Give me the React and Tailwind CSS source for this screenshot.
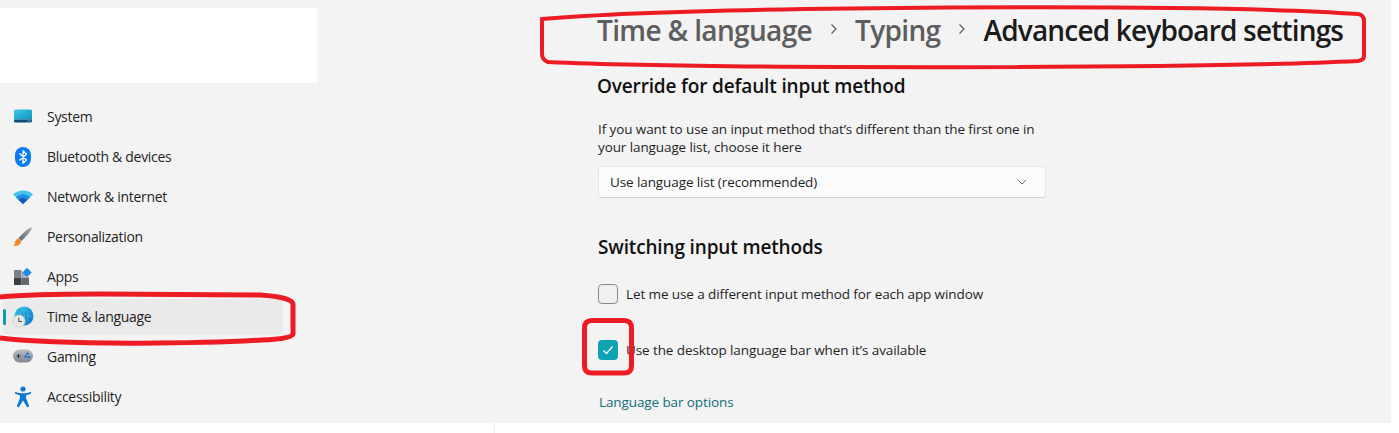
import React from "react";

const font = "font-['Open_Sans','Noto_Sans',sans-serif]";

const SystemIcon = () => (
  <svg width="20" height="20" viewBox="0 0.5 20 20">
    <defs>
      <linearGradient id="sys" x1="0" y1="0" x2="1" y2="1">
        <stop offset="0" stopColor="#35c9e0" />
        <stop offset="1" stopColor="#1592c4" />
      </linearGradient>
    </defs>
    <path d="M1 4.500a1.500 1.500 0 0 1 1.500-1.500h15A1.500 1.500 0 0 1 19 4.500V13H1z" fill="url(#sys)" />
    <path d="M1 13h18v1.500a1.500 1.500 0 0 1-1.500 1.500h-15A1.500 1.500 0 0 1 1 14.500z" fill="#0d4f78" />
    <rect x="14.500" y="14" width="1" height="1" fill="#9fd0e6" />
    <rect x="16.500" y="14" width="1" height="1" fill="#9fd0e6" />
  </svg>
);

const BluetoothIcon = () => (
  <svg width="20" height="22" viewBox="0 0 20 22">
    <rect x="2" y="1" width="16" height="20" rx="8" fill="#0a7cf0" />
    <path d="M6.500 7.500l7 6.500-3.500 3.200V4.800L13.500 8l-7 6.500" fill="none" stroke="#fff" strokeWidth="1.300" strokeLinejoin="round" />
  </svg>
);

const WifiIcon = () => (
  <svg width="20" height="20" viewBox="0 1 20 20">
    <path d="M0 8.500C5.500 3.200 14.500 3.200 20 8.500l-2.800 2.800C12.800 7 7.200 7 2.800 11.300z" fill="#43c3ee" />
    <path d="M2.800 11.300C7.200 7 12.800 7 17.200 11.300l-2.400 2.400C12 11 8 11 5.200 13.700z" fill="#1c8fe0" />
    <path d="M5.200 13.700C8 11 12 11 14.800 13.700L10 18.300z" fill="#0a5cb8" />
  </svg>
);

const BrushIcon = () => (
  <svg width="20" height="22" viewBox="0 0 20 22">
    <defs>
      <linearGradient id="brush" x1="0" y1="1" x2="1" y2="0">
        <stop offset="0" stopColor="#5c6670" />
        <stop offset="1" stopColor="#a6adb4" />
      </linearGradient>
    </defs>
    <path d="M17.500 1.500c1 0 1.500.7 1.200 1.600C16.500 7 12 12 8.500 15l-3-3C8.700 8.500 13.500 3.500 17.500 1.500z" fill="url(#brush)" />
    <path d="M5.200 12.200l3 3c-.3 3.200-3.300 5-7.700 4.800 1.800-1.200 1-3 1.900-4.900.6-1.300 1.600-2.400 2.800-2.900z" fill="#f08a24" />
  </svg>
);

const AppsIcon = () => (
  <svg width="20" height="20" viewBox="0 0 20 20">
    <rect x="1" y="3" width="7.500" height="7.500" fill="#7c8288" />
    <rect x="1" y="10.500" width="7.500" height="7.500" fill="#3d4146" />
    <rect x="8.500" y="10.500" width="7.500" height="7.500" fill="#63686d" />
    <rect x="8.500" y="5" width="4" height="5.500" fill="#a5abb0" />
    <path d="M14 .8l4.700 4.700-4.700 4.700-4.700-4.700z" fill="#1c8ee8" />
  </svg>
);

const GlobeIcon = () => (
  <svg width="22" height="22" viewBox="0 0 22 22">
    <defs>
      <linearGradient id="globe" x1="0" y1="0" x2="1" y2="1">
        <stop offset="0" stopColor="#2fc6dc" />
        <stop offset="1" stopColor="#0f6fd0" />
      </linearGradient>
    </defs>
    <circle cx="12" cy="10" r="9.500" fill="url(#globe)" />
    <path d="M12 .5v19M2.500 10h19M12 .5c-3 3-4 6-4 9.500s1 6.500 4 9.500M12 .5c3 3 4 6 4 9.500s-1 6.500-4 9.500" fill="none" stroke="#7fdcec" strokeWidth=".5" opacity=".6" />
    <circle cx="7" cy="15" r="6" fill="#e9e9e9" stroke="#c9c9c9" strokeWidth=".6" />
    <path d="M6.800 11.800V15.500H9.800" fill="none" stroke="#444" strokeWidth="1" />
  </svg>
);

const GamepadIcon = () => (
  <svg width="20" height="16" viewBox="0 1 20 16">
    <defs>
      <linearGradient id="pad" x1="0" y1="0" x2="0" y2="1">
        <stop offset="0" stopColor="#b9bec3" />
        <stop offset="1" stopColor="#7f868c" />
      </linearGradient>
    </defs>
    <rect x="0" y="1.500" width="20" height="13" rx="6.500" fill="url(#pad)" />
    <path d="M3.500 8h4M5.500 6v4" stroke="#30343a" strokeWidth="1" />
    <circle cx="14.500" cy="5.800" r="1.300" fill="#1472d0" />
    <circle cx="12.700" cy="8.500" r="1.300" fill="#1472d0" />
    <circle cx="16" cy="9" r="1.300" fill="#1472d0" />
  </svg>
);

const AccessIcon = () => (
  <svg width="18" height="22" viewBox="0 0 18 22">
    <circle cx="9" cy="3" r="2.600" fill="#0f78d4" />
    <path d="M1.200 5.800c-.8 1.200 0 2 .8 2.300L6 9.500V12l-3 7.500c-.4 1.500 1.600 2.300 2.300 1L9 14.500l3.700 6c.7 1.300 2.700.5 2.300-1L12 12V9.500l4-1.400c.8-.3 1.600-1.100.8-2.300-2.500 1-5 1.500-7.800 1.500s-5.300-.5-7.800-1.500z" fill="#0f78d4" />
  </svg>
);

const navItems = [
  { label: "System", icon: <SystemIcon /> },
  { label: "Bluetooth & devices", icon: <BluetoothIcon /> },
  { label: "Network & internet", icon: <WifiIcon /> },
  { label: "Personalization", icon: <BrushIcon /> },
  { label: "Apps", icon: <AppsIcon /> },
  { label: "Time & language", icon: <GlobeIcon />, active: true },
  { label: "Gaming", icon: <GamepadIcon /> },
  { label: "Accessibility", icon: <AccessIcon /> },
];

const Sidebar = () => (
  <aside className="w-[317px] shrink-0 pt-2">
    <div className="h-[75px] bg-white" />
    <nav className="mt-[14px] flex flex-col">
      {navItems.map((item) => (
        <div key={item.label} className="h-10 flex items-center pl-[3px] pr-[34px]">
          <div className={`relative flex h-9 w-full items-center rounded-md ${item.active ? "bg-[#eaeaea]" : ""}`}>
            {item.active && <span className="absolute left-0 top-[10px] h-4 w-[3px] rounded-full bg-[#0e9aa7]" />}
            <span className="mr-1 flex w-10 justify-center">{item.icon}</span>
            <span className="pb-[2px] text-[14px] tracking-[-0.3px] text-[#1f1f1f]">{item.label}</span>
          </div>
        </div>
      ))}
    </nav>
  </aside>
);

const Chevron = ({ className }) => (
  <svg width="10" height="12" viewBox="0 0 10 12" className={`mb-[2px] ${className}`}>
    <path d="M2.500 1.500L7 6l-4.500 4.500" fill="none" stroke="#5c5c5c" strokeWidth="1.200" />
  </svg>
);

const Breadcrumb = () => (
  <div className="-ml-px flex h-[60px] items-center whitespace-nowrap text-[28px] font-semibold tracking-[-0.65px]">
    <span className="text-[#5d5d5d]">Time &amp; language</span>
    <Chevron className="mx-[16.5px]" />
    <span className="text-[#5d5d5d]">Typing</span>
    <Chevron className="mx-[16.5px]" />
    <span className="tracking-[-0.82px] text-[#1b1b1b]">Advanced keyboard settings</span>
  </div>
);

const Main = () => (
  <main className="flex-1 pl-[281px] text-[#1f1f1f]">
    <Breadcrumb />
    <h2 className="mt-[12px] -ml-px text-[19px] font-semibold leading-[28px] tracking-[-0.15px] text-[#111]">Override for default input method</h2>
    <p className="mt-5 w-[460px] text-[13.5px] leading-[18px] tracking-[-0.1px]">
      If you want to use an input method that’s different than the first one in your language list, choose it here
    </p>
    <div className="mt-[10px] flex h-8 w-[448px] items-center justify-between rounded border border-[#e5e5e5] border-b-[#cfcfcf] bg-[#fbfbfb] pl-[11px] pr-[18px] text-[13.5px] tracking-[-0.1px]">
      <span>Use language list (recommended)</span>
      <svg width="10" height="6" viewBox="0 0 10 6">
        <path d="M.8.800L5 5l4.200-4.200" fill="none" stroke="#6a6a6a" strokeWidth="1" />
      </svg>
    </div>
    <h2 className="mt-[35px] text-[19px] font-semibold leading-[28px] tracking-[-0.15px] text-[#111]">Switching input methods</h2>
    <div className="mt-[23px] flex h-5 items-center gap-2 text-[13.5px] tracking-[-0.1px]">
      <span className="h-5 w-5 rounded border border-[#8b8b8b] bg-[#f0f0f0]" />
      <span>Let me use a different input method for each app window</span>
    </div>
    <div className="mt-9 flex h-5 items-center gap-2 text-[13.5px] tracking-[-0.1px]">
      <span className="flex h-5 w-5 items-center justify-center rounded bg-[#0ca3b3]">
        <svg width="12" height="10" viewBox="0 0 12 10">
          <path d="M1.500 5.500l3 3 6-7" fill="none" stroke="#fff" strokeWidth="1.200" />
        </svg>
      </span>
      <span>Use the desktop language bar when it’s available</span>
    </div>
    <a className="mt-[33px] ml-[1px] block text-[13.5px] font-medium leading-[18px] tracking-[-0.1px] text-[#0f6f78]">Language bar options</a>
  </main>
);

// red marker rings drawn over the screenshot
const Annotations = () => (
  <svg width="1399" height="433" className="pointer-events-none absolute left-0 top-0" fill="none" stroke="#ed1c24">
    <path strokeWidth="4" d="M542 19 C700 6 1200 3 1358 14 Q1364 15 1364 21 L1364 56 Q1364 60 1358 61 C1200 69 700 69 548 62 Q542 60 542 54 Z" />
    <path strokeWidth="5" d="M0 297 C30 294 60 294 100 294 L260 295 Q292 297 293 304 L293 334 Q292 339 262 340 C200 344 60 345 0 338" />
    <path strokeWidth="5" d="M592 320.5 L624 320.5 Q631.5 320.5 631.5 328 L631.5 366 Q631.5 373 624 373 L592 373 Q584.5 373 584.5 366 L584.5 328 Q584.5 320.5 592 320.5 Z" />
  </svg>
);

export default function App() {
  return (
    <div className={`relative h-[433px] w-[1399px] overflow-hidden bg-white ${font}`}>
      <div className="flex h-[423px] w-[1391px] bg-[#f3f3f3]">
        <Sidebar />
        <Main />
      </div>
      <div className="ml-[494px] h-[10px] w-px bg-[#eeeeee]" />
      <Annotations />
    </div>
  );
}
